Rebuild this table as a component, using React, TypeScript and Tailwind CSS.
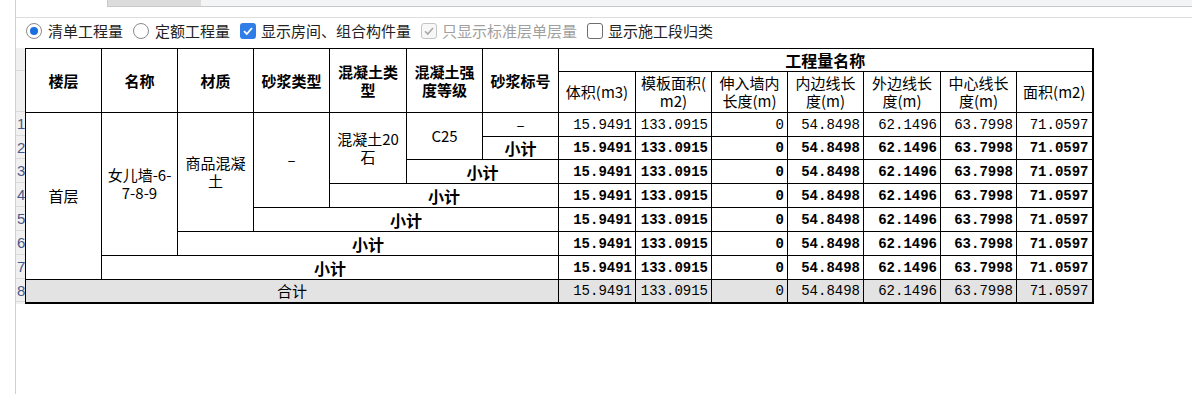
import React from "react";

const CJK = "font-['Noto_Sans_CJK_SC',sans-serif]";
const NUM = "font-['Liberation_Mono','Noto_Sans_CJK_SC',monospace]";

const values = ["15.9491", "133.0915", "0", "54.8498", "62.1496", "63.7998", "71.0597"];
const colWidths = [76, 76, 76, 76, 77, 76, 76, 77, 76, 76, 76, 77, 76, 76];
const rowHeights = [24, 23, 24, 24, 24, 24, 24, 23];

const Radio = ({ checked, label }: { checked?: boolean; label: string }) => (
  <label className="flex items-center gap-[6px]">
    <span className="flex h-[16px] w-[16px] items-center justify-center rounded-full border border-[#8a8a8a] bg-white">
      {checked && <span className="h-[8px] w-[8px] rounded-full bg-[#1a6fe0]" />}
    </span>
    <span>{label}</span>
  </label>
);

const Check = ({ state, label }: { state: "on" | "off" | "disabled"; label: string }) => (
  <label className={`flex items-center gap-[5px] ${state === "disabled" ? "text-[#a0a0a0]" : ""}`}>
    {state === "on" && (
      <span className="flex h-[16px] w-[16px] items-center justify-center rounded-[3px] bg-[#2f7de6]">
        <svg width="12" height="12" viewBox="0 0 12 12">
          <path d="M2 6.2 L4.8 9 L10 3" fill="none" stroke="white" strokeWidth="1.8" />
        </svg>
      </span>
    )}
    {state === "disabled" && (
      <span className="flex h-[16px] w-[16px] items-center justify-center rounded-[3px] border border-[#c4c4c4] bg-[#f7f7f7]">
        <svg width="12" height="12" viewBox="0 0 12 12">
          <path d="M2 6.2 L4.8 9 L10 3" fill="none" stroke="#a8a8a8" strokeWidth="1.6" />
        </svg>
      </span>
    )}
    {state === "off" && <span className="h-[16px] w-[16px] rounded-[3px] border border-[#6e6e6e] bg-white" />}
    <span>{label}</span>
  </label>
);

const td = "border border-black px-[3px] py-0 align-middle";

const Nums = ({ bold }: { bold?: boolean }) => (
  <>
    {values.map((v, i) => (
      <td key={i} className={`${td} text-right text-[14px] leading-[18px] ${NUM} ${bold ? "font-bold" : ""}`}>
        {v}
      </td>
    ))}
  </>
);

const Sub = ({ span }: { span?: number }) => (
  <td colSpan={span} className={`${td} text-center text-[16px] leading-[18px] font-bold`}>
    小计
  </td>
);

export default function App() {
  return (
    <div className={`flex h-[394px] w-[1192px] overflow-hidden bg-white text-black ${CJK}`}>
      <div className="w-[15px] shrink-0" />
      <div className="flex min-w-0 flex-1 flex-col border-l border-[#d2d2d2]">
        {/* top scrollbar strip */}
        <div className="h-[18px] shrink-0 border-b border-[#dedede]">
          <div className="ml-[91px] flex h-[7px] border-b border-l border-[#c9c9c9]">
            <div className="w-[93px] bg-[#dcdcdc]" />
            <div className="flex-1 bg-[#f3f4f6]" />
          </div>
        </div>

        {/* options */}
        <div className="flex h-[26px] shrink-0 items-center gap-[10px] pl-[10px] text-[15px] text-[#222]">
          <Radio checked label="清单工程量" />
          <Radio label="定额工程量" />
          <Check state="on" label="显示房间、组合构件量" />
          <Check state="disabled" label="只显示标准层单层量" />
          <Check state="off" label="显示施工段归类" />
        </div>

        <div className="mt-[4px] flex">
          {/* row number strip */}
          <div className="w-[9px] shrink-0 bg-[#f0f0f0] font-['Liberation_Sans',sans-serif] text-[15px] leading-none text-[#44598a]">
            <div className="h-[23px] border-b border-[#dadada]" />
            <div className="h-[41px] border-b border-[#dadada]" />
            {rowHeights.map((h, i) => (
              <div
                key={i}
                style={{ height: h }}
                className="flex items-center overflow-visible border-b border-[#dadada] pl-[1px]"
              >
                {i + 1}
              </div>
            ))}
          </div>

          <table className="w-[1068px] table-fixed border-collapse border-r-2 border-b-2 border-black">
            <colgroup>
              {colWidths.map((w, i) => (
                <col key={i} style={{ width: w }} />
              ))}
            </colgroup>
            <thead>
              <tr className="h-[23px]">
                {[
                  ["楼层"],
                  ["名称"],
                  ["材质"],
                  ["砂浆类型"],
                  ["混凝土类", "型"],
                  ["混凝土强", "度等级"],
                  ["砂浆标号"],
                ].map((lines, i) => (
                  <th key={i} rowSpan={2} className={`${td} text-center text-[15px] font-bold leading-[18px]`}>
                    {lines.map((l, j) => (
                      <div key={j}>{l}</div>
                    ))}
                  </th>
                ))}
                <th colSpan={7} className={`${td} text-center text-[16px] font-bold leading-[18px]`}>
                  工程量名称
                </th>
              </tr>
              <tr className="h-[41px]">
                {[
                  ["体积(m3)"],
                  ["模板面积(", "m2)"],
                  ["伸入墙内", "长度(m)"],
                  ["内边线长", "度(m)"],
                  ["外边线长", "度(m)"],
                  ["中心线长", "度(m)"],
                  ["面积(m2)"],
                ].map((lines, i) => (
                  <th key={i} className={`${td} text-center text-[15px] font-normal leading-[18px]`}>
                    {lines.map((l, j) => (
                      <div key={j}>{l}</div>
                    ))}
                  </th>
                ))}
              </tr>
            </thead>
            <tbody className="text-[15px] leading-[18px]">
              <tr style={{ height: rowHeights[0] }}>
                <td rowSpan={7} className={`${td} text-center`}>首层</td>
                <td rowSpan={6} className={`${td} text-center`}>
                  <div>女儿墙-6-</div>
                  <div>7-8-9</div>
                </td>
                <td rowSpan={5} className={`${td} text-center`}>
                  <div>商品混凝</div>
                  <div>土</div>
                </td>
                <td rowSpan={4} className={`${td} text-center`}>–</td>
                <td rowSpan={3} className={`${td} text-center`}>
                  <div>混凝土20</div>
                  <div>石</div>
                </td>
                <td rowSpan={2} className={`${td} text-center`}>C25</td>
                <td className={`${td} text-center`}>–</td>
                <Nums />
              </tr>
              <tr style={{ height: rowHeights[1] }}>
                <Sub />
                <Nums bold />
              </tr>
              <tr style={{ height: rowHeights[2] }}>
                <Sub span={2} />
                <Nums bold />
              </tr>
              <tr style={{ height: rowHeights[3] }}>
                <Sub span={3} />
                <Nums bold />
              </tr>
              <tr style={{ height: rowHeights[4] }}>
                <Sub span={4} />
                <Nums bold />
              </tr>
              <tr style={{ height: rowHeights[5] }}>
                <Sub span={5} />
                <Nums bold />
              </tr>
              <tr style={{ height: rowHeights[6] }}>
                <Sub span={6} />
                <Nums bold />
              </tr>
              <tr style={{ height: rowHeights[7] }} className="bg-[#e3e3e3]">
                <td colSpan={7} className={`${td} text-center`}>合计</td>
                <Nums />
              </tr>
            </tbody>
          </table>
        </div>
      </div>
    </div>
  );
}
